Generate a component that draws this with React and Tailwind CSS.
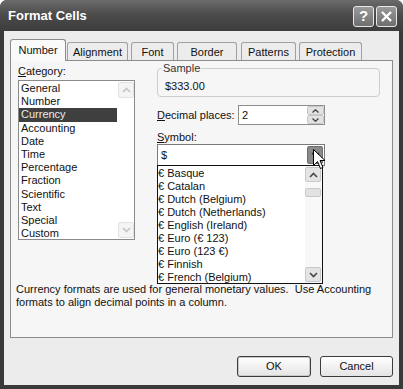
import React from "react";

const categories = [
  "General",
  "Number",
  "Currency",
  "Accounting",
  "Date",
  "Time",
  "Percentage",
  "Fraction",
  "Scientific",
  "Text",
  "Special",
  "Custom",
];

const symbols = [
  "€ Basque",
  "€ Catalan",
  "€ Dutch (Belgium)",
  "€ Dutch (Netherlands)",
  "€ English (Ireland)",
  "€ Euro (€ 123)",
  "€ Euro (123 €)",
  "€ Finnish",
  "€ French (Belgium)",
];

const tabs = [
  { label: "Number", cls: "w-[56px] h-[22px] bg-[#fafafa] border-[#8c8c8c] z-10" },
  { label: "Alignment", cls: "ml-[1px] w-[61px] h-[19px] bg-[#ececec] border-[#a0a0a0]" },
  { label: "Font", cls: "ml-[3px] w-[43px] h-[19px] bg-[#ececec] border-[#a0a0a0]" },
  { label: "Border", cls: "ml-[3px] w-[60px] h-[19px] bg-[#ececec] border-[#a0a0a0]" },
  { label: "Patterns", cls: "ml-[4px] w-[55px] h-[19px] bg-[#ececec] border-[#a0a0a0]" },
  { label: "Protection", cls: "ml-[3px] w-[63px] h-[19px] bg-[#ececec] border-[#a0a0a0]" },
];

function Chevron({ up }) {
  return (
    <svg width="9" height="6" viewBox="0 0 9 6">
      <path
        d={up ? "M1 5 L4.5 1.5 L8 5" : "M1 1 L4.5 4.5 L8 1"}
        fill="none"
        stroke="currentColor"
        strokeWidth="1.7"
      />
    </svg>
  );
}

function ScrollBtn({ up, dim }) {
  return (
    <div
      className={
        dim
          ? "w-[16px] h-[16px] rounded-[2px] border border-[#e2e2e2] bg-[#f4f4f4] text-[#c4c4c4] flex items-center justify-center"
          : "w-[16px] h-[15px] rounded-[2px] border border-[#c8c8c8] bg-[#e4e4e4] text-[#4a4a4a] flex items-center justify-center"
      }
    >
      <Chevron up={up} />
    </div>
  );
}

function Cursor() {
  return (
    <svg
      width="13"
      height="21"
      viewBox="0 0 13 21"
      className="absolute left-[313px] top-[149px] z-30"
    >
      <path
        d="M0.5 0.5 L0.5 16.5 L4.5 12.5 L7.5 19.5 L10 18.5 L7 11.5 L12 11.5 Z"
        fill="#fff"
        stroke="#000"
        strokeWidth="1"
      />
    </svg>
  );
}

export default function App() {
  return (
    <div className="relative w-[403px] h-[389px] overflow-hidden rounded-t-[7px] bg-[#3a3a3a] flex flex-col font-['Liberation_Sans',Arial,sans-serif] text-[11px] text-[#111]">
      <Cursor />

      {/* Title bar */}
      <div className="h-[31px] flex items-center pl-[8px] pr-[6px] bg-gradient-to-b from-[#6b6b6b] via-[#4a4a4a] to-[#3d3d3d]">
        <span className="text-white font-bold text-[13px]">Format Cells</span>
        <div className="ml-auto flex gap-[2px] mt-[2px]">
          <div className="w-[21px] h-[21px] rounded-[3px] border border-[#e8e8e8] bg-gradient-to-b from-[#9a9a9a] to-[#6e6e6e] flex items-center justify-center text-white font-bold text-[15px]">
            ?
          </div>
          <div className="w-[21px] h-[21px] rounded-[3px] border border-[#e8e8e8] bg-gradient-to-b from-[#9a9a9a] to-[#6e6e6e] flex items-center justify-center text-white">
            <svg width="13" height="13" viewBox="0 0 13 13">
              <path d="M2 2 L11 11 M11 2 L2 11" stroke="#fff" strokeWidth="2.4" />
            </svg>
          </div>
        </div>
      </div>

      {/* Client area */}
      <div className="flex-1 mx-[4px] mb-[4px] bg-[#ececec] px-[6px] pt-[8px] flex flex-col">
        {/* Tabs */}
        <div className="flex items-end h-[21px]">
          {tabs.map((t) => (
            <div
              key={t.label}
              className={`${t.cls} relative -mb-[1px] border border-b-0 rounded-t-[3px] flex items-center justify-center`}
            >
              {t.label}
            </div>
          ))}
        </div>

        {/* Panel */}
        <div className="h-[278px] border border-[#8c8c8c] bg-[#f6f6f6] relative">
          <div className="flex pl-[7px]">
            {/* Left column */}
            <div className="w-[117px]">
              <div className="mt-[4px] h-[13px] leading-[13px]">
                <span className="underline">C</span>ategory:
              </div>
              <div className="mt-[2px] w-[117px] h-[160px] border border-[#8a8a8a] bg-white flex">
                <div className="flex-1 pt-[1px]">
                  {categories.map((c) => (
                    <div
                      key={c}
                      className={
                        c === "Currency"
                          ? "h-[13.2px] leading-[13px] pl-[2px] bg-[#3f3f3f] text-[#ececec]"
                          : "h-[13.2px] leading-[13px] pl-[2px]"
                      }
                    >
                      {c}
                    </div>
                  ))}
                </div>
                <div className="w-[17px] flex flex-col justify-between pl-[1px] py-[1px]">
                  <ScrollBtn up dim />
                  <ScrollBtn dim />
                </div>
              </div>
            </div>

            {/* Right column */}
            <div className="ml-[22px] w-[223px] relative">
              <div className="relative mt-[7px] h-[29px] border border-[#cdcdcd] rounded-[4px] pl-[7px] pt-[11px] leading-[13px]">
                <span className="absolute left-[4px] top-[-7px] px-[1px] bg-[#f6f6f6] leading-[13px] text-[#333]">
                  Sample
                </span>
                $333.00
              </div>

              <div className="mt-[8px] flex items-center">
                <div className="w-[81px]">
                  <span className="underline">D</span>ecimal places:
                </div>
                <div className="w-[87px] h-[20px] border border-[#8e8e8e] bg-white flex items-center">
                  <span className="pl-[3px] flex-1">2</span>
                  <div className="w-[17px] h-[18px] flex flex-col">
                    <div className="h-[9px] rounded-[2px] border border-[#c8c8c8] bg-[#e2e2e2] text-[#4a4a4a] flex items-center justify-center">
                      <svg width="7" height="4" viewBox="0 0 7 4">
                        <path d="M0.5 3.5 L3.5 0.8 L6.5 3.5" fill="none" stroke="currentColor" strokeWidth="1.4" />
                      </svg>
                    </div>
                    <div className="h-[9px] rounded-[2px] border border-[#c8c8c8] bg-[#e2e2e2] text-[#4a4a4a] flex items-center justify-center">
                      <svg width="7" height="4" viewBox="0 0 7 4">
                        <path d="M0.5 0.5 L3.5 3.2 L6.5 0.5" fill="none" stroke="currentColor" strokeWidth="1.4" />
                      </svg>
                    </div>
                  </div>
                </div>
              </div>

              <div className="mt-[6px] h-[13px] leading-[13px]">
                <span className="underline">S</span>ymbol:
              </div>
              <div className="w-[168px] h-[22px] border border-[#7a7a7a] bg-white flex items-center">
                <span className="pl-[3px] flex-1">$</span>
                <div className="w-[16px] h-[18px] mr-[1px] rounded-[2px] bg-[#8a8a8a] border border-[#6e6e6e] text-[#333] flex items-center justify-center">
                  <Chevron />
                </div>
              </div>

              {/* Open dropdown list */}
              <div className="absolute left-0 top-[104px] z-20 w-[166px] h-[119px] border border-[#111] bg-white flex">
                <div className="flex-1 pt-[1px] overflow-hidden">
                  {symbols.map((s) => (
                    <div key={s} className="h-[13px] leading-[13px] whitespace-nowrap">
                      {s}
                    </div>
                  ))}
                </div>
                <div className="w-[17px] flex flex-col bg-[#f8f8f8] py-[1px]">
                  <ScrollBtn up />
                  <div className="mt-[6px] h-[9px] w-[16px] rounded-[2px] border border-[#c8c8c8] bg-[#e2e2e2]" />
                  <div className="flex-1" />
                  <ScrollBtn />
                </div>
              </div>
            </div>
          </div>

          <p className="mt-[43px] pl-[5px] leading-[13px] whitespace-pre-line">
            {"Currency formats are used for general monetary values.\u00a0 Use Accounting\nformats to align decimal points in a column."}
          </p>
        </div>

        {/* Buttons */}
        <div className="mt-[18px] flex justify-end gap-[9px]">
          <button className="w-[74px] h-[21px] rounded-[3px] border border-[#3c3c3c] bg-gradient-to-b from-white to-[#e4e4e4] shadow-[inset_0_0_0_1px_#c9c9c9] text-[11px]">
            OK
          </button>
          <button className="w-[73px] h-[21px] rounded-[3px] border border-[#3c3c3c] bg-gradient-to-b from-white to-[#e4e4e4] text-[11px]">
            Cancel
          </button>
        </div>
      </div>
    </div>
  );
}
